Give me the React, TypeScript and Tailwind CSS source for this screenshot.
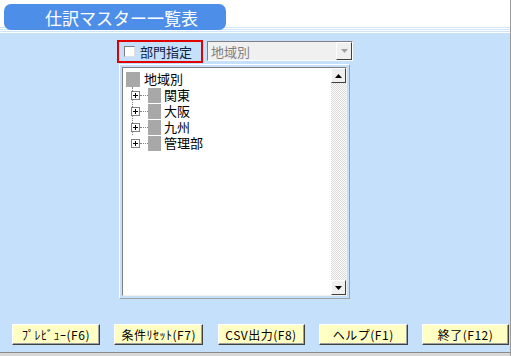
import React from "react";

const FONT = { fontFamily: '"MS Gothic", "Noto Sans CJK JP", sans-serif' };

function PlusBox() {
  return (
    <span className="flex h-[9px] w-[9px] shrink-0 items-center justify-center border border-[#808080] bg-white">
      <svg width="7" height="7" viewBox="0 0 7 7">
        <path d="M1 3.5h5M3.5 1v5" stroke="#000" strokeWidth="1" />
      </svg>
    </span>
  );
}

function TreeChild({ label }: { label: string }) {
  return (
    <div className="flex h-[16px] items-center">
      <div className="flex w-[22px] shrink-0 items-center pl-[5px]">
        <PlusBox />
        <span className="h-0 w-[8px] border-t border-dotted border-[#808080]" />
      </div>
      <span className="h-[15px] w-[13px] shrink-0 bg-[#a8a8a8] blur-[0.6px]" />
      <span className="ml-[3px] whitespace-nowrap text-[13px] leading-[16px] text-black">{label}</span>
    </div>
  );
}

function FnButton({ label, w }: { label: string; w: string }) {
  return (
    <button
      className={`${w} h-[21px] border border-t-white border-l-white border-r-[#404040] border-b-[#404040] bg-[#ffffc4] text-[12px] leading-none tracking-[0.5px] text-black shadow-[inset_-1px_-1px_0_#a0a0a0]`}
    >
      {label}
    </button>
  );
}

export default function App() {
  return (
    <div
      className="flex h-[356px] w-[511px] flex-col overflow-hidden border-r border-[#9a9a9a] bg-[#c5e0fb]"
      style={FONT}
    >
      {/* ヘッダー */}
      <div className="h-[27px] shrink-0 bg-white px-[4px] pt-[4px]">
        <div className="relative z-10 flex h-[26px] w-[222px] items-center rounded-[7px] bg-[#4d8fe8] pl-[41px] text-[17px] leading-none text-white">
          仕訳マスター一覧表
        </div>
      </div>
      <div className="h-[6px] shrink-0 bg-[repeating-linear-gradient(#cfe4f8_0px,#cfe4f8_1px,#ffffff_1px,#ffffff_2px)]" />

      {/* 本体 */}
      <div className="flex flex-1 flex-col">
        <div className="mt-[7px] flex items-start pl-[117px]">
          <label className="flex h-[23px] w-[86px] items-center border-2 border-[#e00000] pl-[5px]">
            <span className="h-[11px] w-[11px] border border-t-[#808080] border-l-[#808080] border-r-[#e0e0e0] border-b-[#e0e0e0] bg-white" />
            <span className="ml-[5px] text-[13px] leading-none text-[#102040]">部門指定</span>
          </label>
          <div className="ml-[4px] mt-[1px] flex h-[20px] w-[146px] border border-t-[#808080] border-l-[#808080] border-r-[#ffffff] border-b-[#ffffff] bg-[#f0f0f0]">
            <span className="flex-1 pl-[3px] pt-[3px] text-[13px] leading-none text-[#808080]">地域別</span>
            <span className="flex w-[16px] items-center justify-center border border-t-white border-l-white border-r-[#404040] border-b-[#404040] bg-[#f0f0f0]">
              <svg width="7" height="4" viewBox="0 0 7 4">
                <path d="M0 0h7L3.5 4z" fill="#a0a0a0" />
              </svg>
            </span>
          </div>
        </div>

        {/* ツリー */}
        <div className="ml-[119px] mt-[1px] flex h-[235px] w-[231px] border border-t-white border-l-white border-r-[#a0a0a0] border-b-[#a0a0a0] p-[2px]">
          <div className="flex flex-1 border border-t-[#808080] border-l-[#808080] border-r-[#f0f0f0] border-b-[#f0f0f0] bg-white">
            <div className="relative flex-1 pl-[3px] pt-[3px]">
              <div className="flex h-[16px] items-center">
                <span className="h-[15px] w-[14px] bg-[#a8a8a8] blur-[0.6px]" />
                <span className="ml-[4px] whitespace-nowrap text-[13px] leading-[16px] text-black">地域別</span>
              </div>
              <div className="absolute left-[9px] top-[19px] h-[48px] border-l border-dotted border-[#808080]" />
              <div className="relative">
                <TreeChild label="関東" />
                <TreeChild label="大阪" />
                <TreeChild label="九州" />
                <TreeChild label="管理部" />
              </div>
            </div>
            {/* スクロールバー */}
            <div className="flex w-[15px] flex-col bg-[repeating-conic-gradient(#d8d8d8_0%_25%,#ffffff_0%_50%)] bg-[length:2px_2px]">
              <span className="flex h-[15px] items-center justify-center border border-t-white border-l-white border-r-[#404040] border-b-[#404040] bg-[#f0f0f0]">
                <svg width="7" height="4" viewBox="0 0 7 4">
                  <path d="M0 4h7L3.5 0z" fill="#000" />
                </svg>
              </span>
              <span className="flex-1" />
              <span className="flex h-[15px] items-center justify-center border border-t-white border-l-white border-r-[#404040] border-b-[#404040] bg-[#f0f0f0]">
                <svg width="7" height="4" viewBox="0 0 7 4">
                  <path d="M0 0h7L3.5 4z" fill="#000" />
                </svg>
              </span>
            </div>
          </div>
        </div>

        {/* ボタン */}
        <div className="mt-auto flex items-center justify-between pb-[7px] pl-[12px] pr-[1px]">
          <FnButton label="ﾌﾟﾚﾋﾞｭｰ(F6)" w="w-[88px]" />
          <FnButton label="条件ﾘｾｯﾄ(F7)" w="w-[89px]" />
          <FnButton label="CSV出力(F8)" w="w-[87px]" />
          <FnButton label="ヘルプ(F1)" w="w-[89px]" />
          <FnButton label="終了(F12)" w="w-[87px]" />
        </div>
      </div>
      <div className="h-[4px] shrink-0 border-t border-[#8a8a8a] bg-[#d8d8d8]" />
    </div>
  );
}
